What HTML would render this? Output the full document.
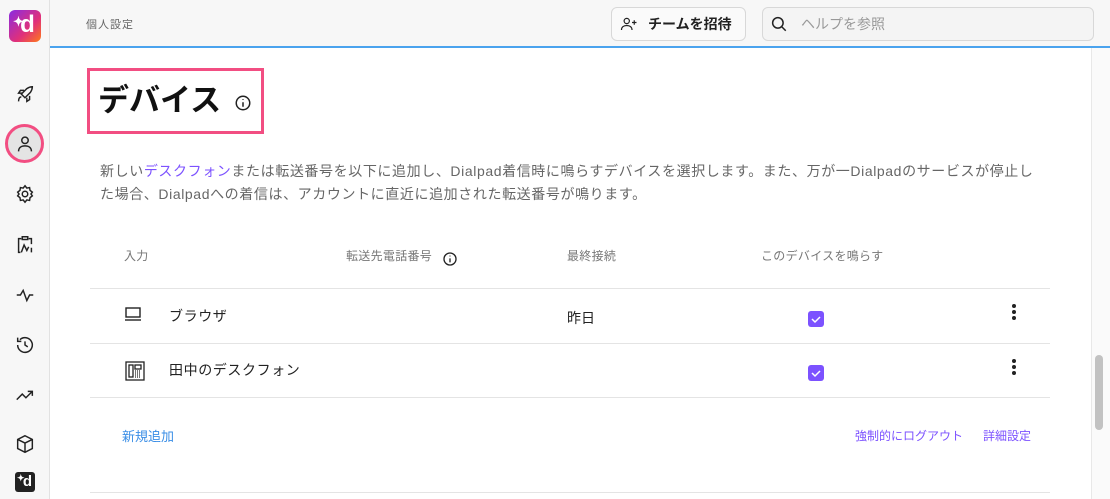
<!DOCTYPE html>
<html><head><meta charset="utf-8"><style>
*{box-sizing:border-box;margin:0;padding:0}
body{width:1110px;height:499px;overflow:hidden;background:#fff;font-family:"Liberation Sans","Noto Sans CJK JP",sans-serif;position:relative;color:#222}
.a{position:absolute}
.side{left:0;top:0;width:50px;height:499px;background:#f7f7f7;border-right:1px solid #e2e2e2}
.hdr{left:50px;top:0;width:1060px;height:46px;background:#f7f7f7}
.ic{position:absolute;left:14px;width:22px;height:22px}
.line{position:absolute;left:90px;width:960px;height:1px;background:#e4e4e4}
.th{position:absolute;top:247px;font-size:12px;color:#777;letter-spacing:.3px}
.chk{position:absolute;left:808px;width:16px;height:16px;background:#7c52ff;border-radius:3px}
.dots{position:absolute;left:1012px;width:4px}
.dots i{display:block;width:4px;height:4px;border-radius:2px;background:#222;margin-bottom:2px}
.r{letter-spacing:.6px}
</style></head><body>
<div class="a side"></div>
<div class="a" style="left:9px;top:10px;width:32px;height:32px;border-radius:6px;background:linear-gradient(135deg,#8a2be2,#e0307a 60%,#ff7a1a);color:#fff;font-weight:bold;font-size:24px;line-height:30px;text-align:center;padding-left:5px">d<span style="position:absolute;left:4px;top:-3px;font-size:13px">✦</span></div>
<svg class="ic" style="top:84px" viewBox="0 0 24 24" fill="none" stroke="#222" stroke-width="1.6"><path d="M5 19c0-3 1-5 3-5M14 5c3-2 6-2 6-2s0 3-2 6l-6 6-4-4z M9 10H5l2-3h4M14 15v4l3-2v-4"/></svg>
<div class="a" style="left:5px;top:124px;width:39px;height:39px;border-radius:50%;border:3px solid #f24e82;background:#e4e4e4"></div>
<svg class="ic" style="top:133px" viewBox="0 0 24 24" fill="none" stroke="#222" stroke-width="1.6"><circle cx="12" cy="8" r="3.5"/><path d="M5 20c0-4 3-6 7-6s7 2 7 6"/></svg>
<svg class="ic" style="top:183px" viewBox="0 0 24 24" fill="none" stroke="#222" stroke-width="1.6"><circle cx="12" cy="12" r="3"/><path d="M12 3l2 2.5 3-.5 .5 3 2.5 2-1.5 2 1.5 2-2.5 2-.5 3-3-.5L12 21l-2-2.5-3 .5-.5-3L4 14l1.5-2L4 10l2.5-2 .5-3 3 .5z"/></svg>
<svg class="ic" style="top:234px" viewBox="0 0 24 24" fill="none" stroke="#222" stroke-width="1.6"><path d="M8 5H5v15h2M9 3h6v3H9zM16 5h3v6M8 20l3-8 3 6 2-4M19 15v5"/></svg>
<svg class="ic" style="top:284px" viewBox="0 0 24 24" fill="none" stroke="#222" stroke-width="1.6"><path d="M3 12h4l3-5 4 11 3-6h4"/></svg>
<svg class="ic" style="top:334px" viewBox="0 0 24 24" fill="none" stroke="#222" stroke-width="1.6"><path d="M4 12a8 8 0 1 0 2.5-5.8M4 4v4h4M12 8v4l3 2"/></svg>
<svg class="ic" style="top:384px" viewBox="0 0 24 24" fill="none" stroke="#222" stroke-width="1.6"><path d="M3 17l6-6 4 4 7-7M15 8h5v5"/></svg>
<svg class="ic" style="top:433px" viewBox="0 0 24 24" fill="none" stroke="#222" stroke-width="1.6"><path d="M12 3l8 4v10l-8 4-8-4V7zM4 7l8 4 8-4M12 11v10"/></svg>
<div class="a" style="left:15px;top:472px;width:20px;height:20px;background:#222;border-radius:3px;color:#fff;font-size:15px;font-weight:bold;line-height:20px;text-align:right;padding-right:3px">d<span style="position:absolute;left:2px;top:-4px;font-size:9px">✦</span></div>

<div class="a hdr"></div>
<div class="a" style="left:86px;top:16px;font-size:11px;color:#666;letter-spacing:1px">個人設定</div>
<div class="a" style="left:611px;top:7px;width:135px;height:34px;border:1px solid #d8d8d8;border-radius:6px;background:#fafafa;font-size:14px;font-weight:bold;line-height:32px;padding-left:36px">チームを招待</div>
<svg class="a" style="left:620px;top:15px" width="18" height="18" viewBox="0 0 24 24" fill="none" stroke="#222" stroke-width="1.6"><circle cx="9" cy="8" r="3.5"/><path d="M2 20c0-4 3-6 7-6s7 2 7 6M19 7v6M16 10h6"/></svg>
<div class="a" style="left:762px;top:7px;width:332px;height:34px;border:1px solid #d8d8d8;border-radius:6px;background:#f4f4f4;font-size:14px;color:#999;line-height:32px;padding-left:38px">ヘルプを参照</div>
<svg class="a" style="left:770px;top:15px" width="18" height="18" viewBox="0 0 24 24" fill="none" stroke="#222" stroke-width="2"><circle cx="10.5" cy="10.5" r="7"/><path d="M16 16l5 5"/></svg>
<div class="a" style="left:50px;top:46px;width:1060px;height:2px;background:#4aa3ee"></div>
<div class="a" style="left:1091px;top:48px;width:19px;height:451px;background:#fafafa;border-left:1px solid #e8e8e8"></div>
<div class="a" style="left:1095px;top:355px;width:8px;height:75px;border-radius:4px;background:#c2c2c2"></div>

<div class="a" style="left:87px;top:68px;width:177px;height:66px;border:3px solid #f24e82"></div>
<div class="a" style="left:98px;top:81px;font-size:31px;font-weight:bold;color:#111;line-height:40px">デバイス</div>
<svg class="a" style="left:234px;top:94px" width="18" height="18" viewBox="0 0 24 24" fill="none" stroke="#222" stroke-width="2"><circle cx="12" cy="12" r="9"/><path d="M12 11v6M12 7v1"/></svg>

<div class="a" style="left:100px;top:160px;width:946px;font-size:14px;color:#666;line-height:23px;letter-spacing:.6px">新しい<span style="color:#7c52ff">デスクフォン</span>または転送番号を以下に追加し、Dialpad着信時に鳴らすデバイスを選択します。また、万が一Dialpadのサービスが停止した場合、Dialpadへの着信は、アカウントに直近に追加された転送番号が鳴ります。</div>

<div class="th" style="left:124px">入力</div>
<div class="th" style="left:346px">転送先電話番号</div>
<svg class="a" style="left:442px;top:251px" width="16" height="16" viewBox="0 0 24 24" fill="none" stroke="#222" stroke-width="2"><circle cx="12" cy="12" r="9"/><path d="M12 11v6M12 7v1"/></svg>
<div class="th" style="left:567px">最終接続</div>
<div class="th" style="left:761px">このデバイスを鳴らす</div>
<div class="line" style="top:288px"></div>
<div class="line" style="top:343px"></div>
<div class="line" style="top:397px"></div>
<div class="line" style="top:492px"></div>

<svg class="a" style="left:124px;top:306px" width="18" height="16" viewBox="0 0 18 16" fill="none" stroke="#222" stroke-width="1.4"><rect x="2" y="2" width="14" height="9"/><path d="M1 14h16"/></svg>
<div class="a r" style="left:169px;top:306px;font-size:14px">ブラウザ</div>
<div class="a" style="left:567px;top:308px;font-size:14px">昨日</div>
<div class="chk" style="top:311px"><svg width="16" height="16"><path d="M4 8l3 3 5-5" stroke="#fff" stroke-width="1.5" fill="none"/></svg></div>
<div class="dots" style="top:304px"><i></i><i></i><i></i></div>

<svg class="a" style="left:125px;top:361px" width="20" height="20" viewBox="0 0 20 20" fill="none" stroke="#222" stroke-width="1.3"><rect x="1" y="1" width="18" height="18"/><rect x="4" y="4" width="4" height="12"/><rect x="10" y="4" width="6" height="4"/><path d="M10 10h6M10 12h6M10 14h6M10 16h6" stroke-dasharray="1 1"/></svg>
<div class="a r" style="left:169px;top:360px;font-size:14px">田中のデスクフォン</div>
<div class="chk" style="top:365px"><svg width="16" height="16"><path d="M4 8l3 3 5-5" stroke="#fff" stroke-width="1.5" fill="none"/></svg></div>
<div class="dots" style="top:359px"><i></i><i></i><i></i></div>

<div class="a" style="left:122px;top:426px;font-size:13px;color:#3a8ee6">新規追加</div>
<div class="a" style="left:855px;top:427px;font-size:12px;color:#7c52ff">強制的にログアウト</div>
<div class="a" style="left:983px;top:427px;font-size:12px;color:#7c52ff">詳細設定</div>
</body></html>
